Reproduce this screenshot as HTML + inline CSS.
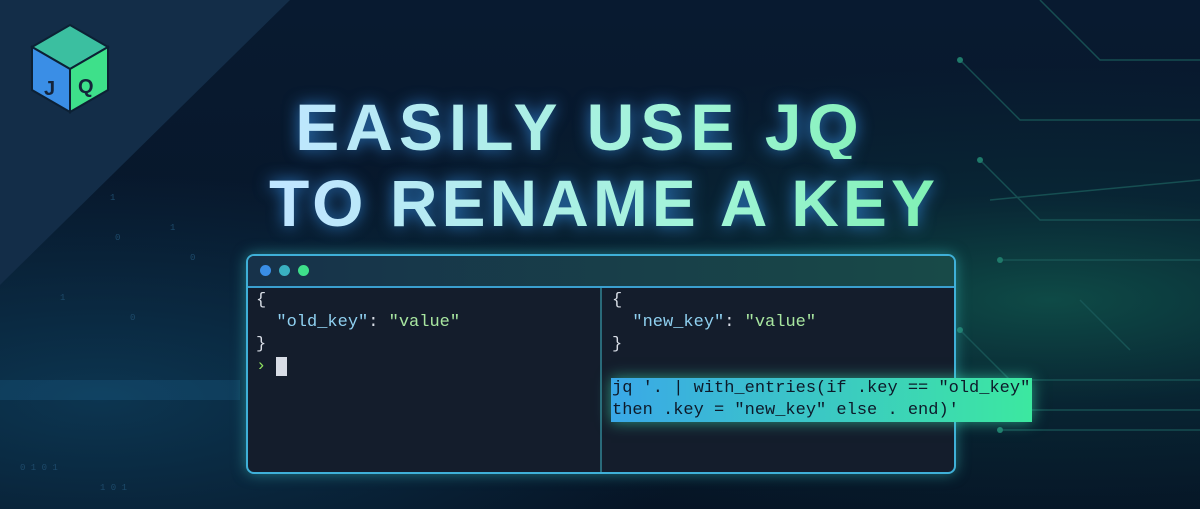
<!DOCTYPE html>
<html><head><style>
body{margin:0;width:1200px;height:509px;overflow:hidden;background:#071627;font-family:"Liberation Sans",sans-serif;position:relative}
.bg{position:absolute;inset:0;background:radial-gradient(ellipse at 1050px 300px,#0e4a46 0%,rgba(10,50,60,.5) 25%,transparent 55%),radial-gradient(ellipse at 100px 400px,#0c3550 0%,transparent 40%),linear-gradient(180deg,#081a30,#061425)}
.tri{position:absolute;left:0;top:0;width:0;height:0;border-top:285px solid #132d48;border-right:290px solid transparent}
.t{position:absolute;left:0;width:1200px;text-align:center;font-weight:bold;font-size:66px;line-height:64px;background:linear-gradient(90deg,#bfe6ff 25%,#9ff5d5 60%,#7cf0b0 80%);-webkit-background-clip:text;color:transparent;filter:drop-shadow(0 0 8px rgba(60,160,255,.7))}
.term{position:absolute;left:246px;top:254px;width:706px;height:216px;border:2px solid #3fb0d8;border-radius:8px;background:#141d2c;box-shadow:0 0 14px rgba(60,200,200,.5);overflow:hidden}
.hd{height:30px;border-bottom:2px solid #3a9fcf;background:linear-gradient(90deg,#17324a,#184a48)}
.dot{position:absolute;top:9px;width:11px;height:11px;border-radius:50%}
.div{position:absolute;left:352px;top:32px;bottom:0;width:2px;background:#2a6a7a}
pre{position:absolute;margin:0;font-family:"Liberation Mono",monospace;font-size:17px;line-height:22px;color:#d8dde6}
.s{color:#a8e6a0}.k{color:#8fd0f0}
.hl{position:absolute;left:611px;top:378px;width:421px;height:44px;background:linear-gradient(90deg,#3aa8e8,#3ce8a0);box-shadow:0 0 14px rgba(60,230,180,.6)}
</style></head><body>
<div class="bg"></div><div class="tri"></div>
<svg style="position:absolute;left:0;top:0" width="1200" height="509">
<g stroke="#1a5a5a" stroke-width="1.5" fill="none" opacity=".8">
<path d="M960 60 L1020 120 L1200 120"/><path d="M980 160 L1040 220 L1200 220"/><path d="M1000 260 L1200 260"/><path d="M960 330 L1010 380 L1200 380"/><path d="M1000 430 L1200 430"/><path d="M900 470 L960 410 L1200 410"/><path d="M1040 0 L1100 60 L1200 60"/><path d="M1080 300 L1130 350"/><path d="M990 200 L1200 180"/>
</g>
<g fill="#1f7a6a"><circle cx="960" cy="60" r="3"/><circle cx="980" cy="160" r="3"/><circle cx="1000" cy="260" r="3"/><circle cx="960" cy="330" r="3"/><circle cx="1000" cy="430" r="3"/><circle cx="900" cy="470" r="3"/></g>
<g fill="#1d4a6a" font-family="Liberation Mono" font-size="9">
<text x="110" y="200">1</text><text x="115" y="240">0</text><text x="170" y="230">1</text><text x="190" y="260">0</text><text x="60" y="300">1</text><text x="130" y="320">0</text><text x="20" y="470">0 1 0 1</text><text x="100" y="490">1 0 1</text>
</g>
<rect x="0" y="380" width="240" height="20" fill="#1a6a9a" opacity=".25"/>
<g transform="translate(32,25)">
<polygon points="38,0 76,22 38,44 0,22" fill="#3bbfa0" stroke="#0c2034" stroke-width="2"/>
<polygon points="0,22 38,44 38,87 0,65" fill="#3a8ee6" stroke="#0c2034" stroke-width="2"/>
<polygon points="38,44 76,22 76,65 38,87" fill="#3ee08a" stroke="#0c2034" stroke-width="2"/>
<text x="12" y="70" font-size="20" font-weight="bold" fill="#14243a">J</text>
<text x="46" y="68" font-size="20" font-weight="bold" fill="#14243a">Q</text>
</g>
</svg>
<div class="t" style="top:95px;letter-spacing:6px;left:-20px">EASILY USE JQ</div>
<div class="t" style="top:171px;letter-spacing:4px;left:4px">TO RENAME A KEY</div>
<div class="term"><div class="hd"></div>
<div class="dot" style="left:12px;background:#3a8ee6"></div><div class="dot" style="left:31px;background:#3ab0c0"></div><div class="dot" style="left:50px;background:#3ee08a"></div>
<div class="div"></div></div>
<pre style="left:256px;top:290px">{
  <span class="k">"old_key"</span>: <span class="s">"value"</span>
}
<span style="color:#8fe060">›</span> <span style="background:#d8dde6">&nbsp;</span></pre>
<pre style="left:612px;top:290px">{
  <span class="k">"new_key"</span>: <span class="s">"value"</span>
}</pre>
<div class="hl"></div>
<pre style="left:612px;top:378px;color:#0d1a2a">jq '. | with_entries(if .key == "old_key"
then .key = "new_key" else . end)'</pre>
</body></html>
